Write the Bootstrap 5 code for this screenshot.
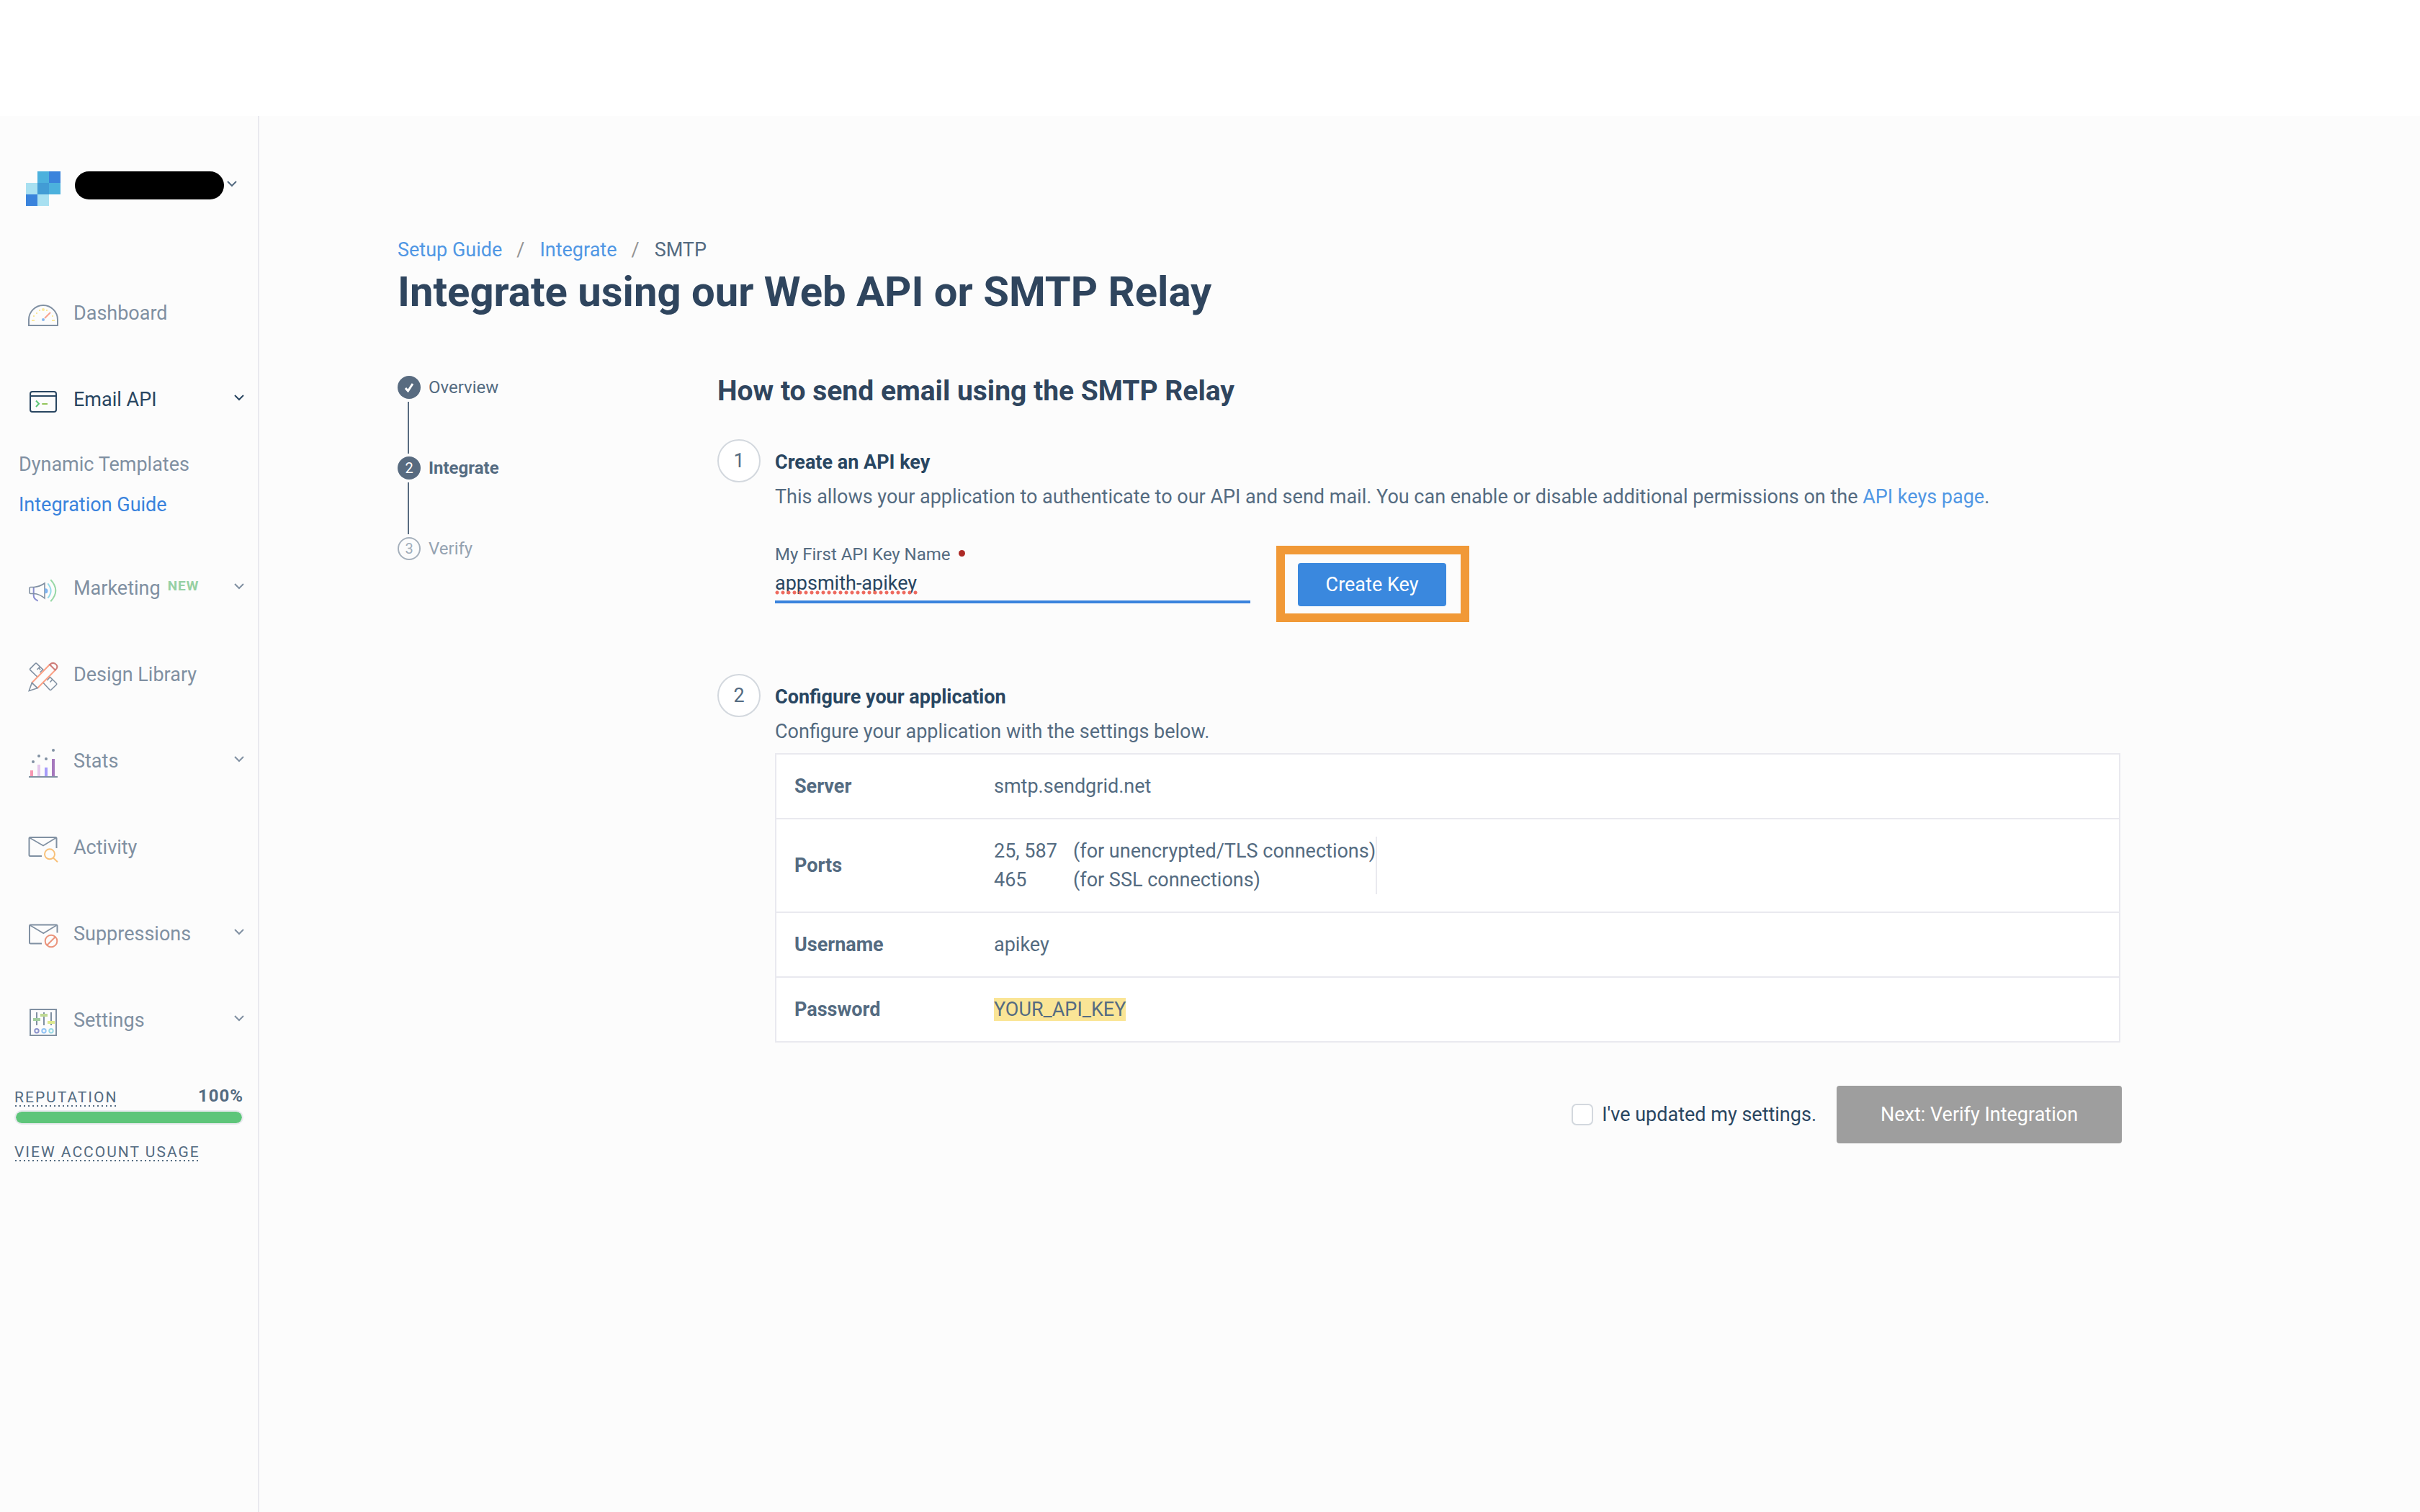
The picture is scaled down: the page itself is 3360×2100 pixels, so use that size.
<!DOCTYPE html>
<html lang="en">
<head>
<meta charset="utf-8">
<meta name="viewport" content="width=device-width, initial-scale=1">
<title>Integrate using our Web API or SMTP Relay</title>
<link rel="stylesheet" href="https://cdn.jsdelivr.net/npm/bootstrap@5.3.0/dist/css/bootstrap.min.css">
<style>
  :root { --ink: #294661; --text: #546b81; --muted: #8090a2; --line: #e9e9ef; --blue: #3a83dd; --link: #5097e4; }
  body { font-family: Roboto, "Liberation Sans", sans-serif; font-size: 27px; line-height: 40px; color: var(--text); background: #fff; }
  a { text-decoration: none; }
  .topspace { height: 161px; }
  .shell { background: #fcfcfc; }

  /* sidebar */
  .sidebar { width: 360px; border-right: 2px solid var(--line); padding-top: 77px; }
  .account { padding-left: 36px; height: 48px; margin-bottom: 89px; }
  .account .btn { color: var(--text); }
  .account-name { width: 207px; height: 39px; border-radius: 20px; background: #000; margin-left: 20px; }
  .chev { width: 14px; height: 14px; fill: none; stroke: currentColor; stroke-width: 2; }
  .side-item { height: 120px; padding: 0 19px 0 39px; color: var(--muted); }
  .side-item.current { color: var(--ink); }
  .side-icon { width: 42px; height: 48px; margin-right: 21px; fill: none; stroke: currentColor; stroke-width: 2; overflow: visible; }
  .side-sub { padding: 2px 0 28px 26px; }
  .side-sub a { line-height: 56px; color: var(--muted); }
  .side-sub a.current { color: var(--blue); }
  .new-tag { font-size: 19px; font-weight: 700; line-height: 28px; color: #96d0a4; letter-spacing: 1px; margin: 0 0 6px 10px; }
  .usage { padding: 33px 20px 0; }
  .caps { font-size: 21px; line-height: 28px; letter-spacing: 2px; color: var(--text);
    background: linear-gradient(90deg, var(--text) 2px, transparent 2px) 1px 25px / 6px 2px repeat-x; }
  .score { font-size: 24px; line-height: 24px; letter-spacing: 1px; }
  .meter { height: 20px; margin-top: 4px; border: 2px solid var(--line); border-radius: 10px; background: transparent; }
  .meter .progress-bar { background: #5ec57a; border-radius: 8px; }

  /* content */
  .content { padding: 166px 414px 80px 192px; }
  .crumbs { color: var(--text); margin-bottom: 4px; }
  .crumbs a, .step-text a { color: var(--link); }
  .crumbs .breadcrumb-item { padding: 0; color: var(--text); }
  .crumbs .breadcrumb-item + .breadcrumb-item::before { content: "/"; color: #949494; padding: 0 21px 0 20px; }
  .page-title { font-size: 58px; line-height: 68px; font-weight: 700; color: #2f455e; margin-bottom: 80px; }
  .stepper { width: 444px; padding-top: 3px; font-size: 24px; line-height: 32px; }
  .step-dot { width: 32px; height: 32px; border-radius: 50%; background: #586b80; color: #fff; font-size: 20px; margin-right: 11px; }
  .step-dot.todo { background: transparent; border: 2px solid #a5b0bc; color: #a0acb9; }
  .step-line { width: 2px; height: 72px; margin: 4px 0 4px 14px; background: #586b80; }
  .todo-label { color: #94a2b1; }
  .section-title { font-size: 39px; line-height: 48px; font-weight: 700; color: #2f455e; margin-bottom: 43px; }
  .big-dot { width: 60px; height: 60px; border: 2px solid #d3d8de; border-radius: 50%; background: #fff; margin-right: 20px; }
  .step-body { padding-top: 8px; }
  .step-name { font-size: 27px; line-height: 48px; font-weight: 700; color: var(--ink); margin: 0; }
  .step-text { line-height: 48px; margin: 0; }
  .key-form { margin: 40px 0 72px; }
  .key-field { width: 660px; }
  .key-field label { display: block; font-size: 24px; line-height: 32px; }
  .needed { display: inline-block; width: 9px; height: 9px; border-radius: 50%; background: #ad2a26; margin: 0 0 5px 11px; }
  .key-input { height: 52px; padding: 0; border: 0; border-bottom: 4px solid var(--blue); border-radius: 0; background: transparent !important; color: var(--ink); font-size: 27px; line-height: 40px; box-shadow: none !important; }
  .spell { left: 0; top: 34px; width: 200px; height: 6px; background: radial-gradient(circle at 3px 3px, #ee6a5f 2px, transparent 3px) 0 0 / 8px 6px; pointer-events: none; }
  .callout-frame { margin: 4px 0 0 36px; border: 12px solid #f19937; padding: 12px 20px 10px 18px; }
  .btn-key { width: 206px; height: 60px; padding: 0; border: 0; border-radius: 4px; background: #3a88de; color: #fff; font-size: 27px; line-height: 40px; }
  .settings { width: calc(100% - 2px); margin: 6px 0 60px; border: 2px solid var(--line); border-bottom: 0; border-collapse: separate; border-spacing: 0; background: #fff; }
  .settings > tbody > tr > * { padding: 24px 0; border-bottom: 2px solid var(--line); }
  .settings > tbody > tr > th { width: 302px; padding-left: 25px; font-weight: 700; vertical-align: middle; }
  .ports { border-right: 2px solid var(--line); border-collapse: separate; border-spacing: 0; }
  .ports td { padding: 0; }
  .ports td:first-child { width: 110px; }
  .key-mark { background: #fae596; color: inherit; padding: 0; }
  .agree input { width: 30px; height: 30px; margin: 0 12px 0 0; border: 2px solid #d3d8de; border-radius: 4px; background: #fff; float: none; }
  .agree label { color: var(--ink); }
  .btn-next { width: 396px; height: 80px; margin-left: 28px; border: 0; border-radius: 4px; font-size: 27px; line-height: 40px; }
  .btn-next:disabled { background: #9e9e9e; color: #fff; opacity: 1; }
</style>
<script src="https://cdn.jsdelivr.net/npm/bootstrap@5.3.0/dist/js/bootstrap.bundle.min.js"></script>
</head>
<body class="d-flex flex-column min-vh-100">
<div class="topspace flex-shrink-0"></div>
<div class="shell d-flex flex-grow-1">
  <aside class="sidebar flex-shrink-0">
    <div class="account d-flex align-items-start">
      <svg width="48" height="48" viewBox="0 0 3 3" shape-rendering="crispEdges" aria-hidden="true">
        <path fill="#4cb1dd" d="M1 0h1v1H1zM2 1h1v1H2z"/><path fill="#3a83dc" d="M2 0h1v1H2zM0 2h1v1H0z"/>
        <path fill="#a8e0f1" d="M0 1h1v1H0zM1 2h1v1H1z"/><path fill="#429cd5" d="M1 1h1v1H1z"/>
      </svg>
      <button type="button" class="btn p-0 border-0 d-flex align-items-center" aria-label="Account menu">
        <span class="account-name"></span>
        <svg class="chev ms-1" viewBox="0 1 14 14"><path d="M1 2l6 6 6-6"/></svg>
      </button>
    </div>
    <nav class="d-flex flex-column">
      <a href="#" class="side-item d-flex align-items-center">
        <svg class="side-icon" viewBox="0 1 42 48"><path d="M1 42V34a20 20 0 0 1 40 0v8z"/>
          <g fill="#fbe89c" stroke="none"><circle cx="21" cy="20" r="2"/><path d="M15 20h2v2h-2zM25 20h2v2h-2zM11 24h2v2h-2zM7 28h2v2H7zM33 28h2v2h-2zM5 34h4v2H5zM33 34h4v2h-4z"/></g>
          <path d="M23 32l8-8" stroke="#f7a08c"/><circle cx="21" cy="34" r="2" fill="#86b6ee" stroke="none"/></svg>
        <span>Dashboard</span>
      </a>
      <a href="#" class="side-item current d-flex align-items-center">
        <svg class="side-icon" viewBox="0 1 42 48"><rect x="3" y="14" width="36" height="28" rx="3"/><path d="M3 20h36"/>
          <path d="M11 26.500l4 4.200-4 4.300" stroke="#5cc575"/><path d="M19.300 31H27" stroke="#93c45b"/></svg>
        <span>Email API</span>
        <svg class="chev ms-auto" viewBox="0 1 14 14"><path d="M1 2l6 6 6-6"/></svg>
      </a>
      <div class="side-sub d-flex flex-column">
        <a href="#">Dynamic Templates</a>
        <a href="#" class="current">Integration Guide</a>
      </div>
      <a href="#" class="side-item d-flex align-items-center">
        <svg class="side-icon" viewBox="0 1 42 48"><path d="M7.700 24v11q0 5 6 7.500" stroke="#8a8fd0"/>
          <path d="M8 23.500H3.500q-1.500 0-1.500 1.500v6q0 1.500 1.500 1.500H8q8 .5 15 6.500V18q-7 5-15 5.500z" stroke-width="1.600"/>
          <path d="M24 26.300a2.500 2.500 0 0 1 0 5z" fill="#7fb4f0" stroke="#7fb4f0"/>
          <path d="M27.300 18.300q8.500 10.200 0 20.400" stroke="#97dbe8"/><path d="M31.300 13.300q14 15 0 30" stroke="#98d8a6"/></svg>
        <span>Marketing</span><span class="new-tag">NEW</span>
        <svg class="chev ms-auto" viewBox="0 1 14 14"><path d="M1 2l6 6 6-6"/></svg>
      </a>
      <a href="#" class="side-item d-flex align-items-center">
        <svg class="side-icon" viewBox="0 1 42 48"><g stroke-width="1.600"><path d="M13 28.300L3 18.600q-1-1 0-2l7-7q1-1 2 0L22 19.300M16.500 14l-4 4M17 18.500l-1.500-2.500M20.500 18l-4 4"/>
          <path d="M21 36.300L30 46q1 1 2 0l7.300-7q1-1 0-2L29.300 27.300M34 31.500l-3.500 4M30.300 28.500l-4 4.500"/></g>
          <path d="M30 11L5.300 36.300M37.700 18.700L13 43.700" stroke="#fba084"/>
          <path d="M30 11l7.700 7.700q4.500-4 1.500-7.500-4-4.500-9.200-.2z" stroke="#cf7c78"/><path d="M5.300 36.300l-4 11.200L13 43.700z" stroke-width="1.600"/></svg>
        <span>Design Library</span>
      </a>
      <a href="#" class="side-item d-flex align-items-center">
        <svg class="side-icon" viewBox="0 1 42 48"><g stroke="none"><g fill="#8090a2"><circle cx="7" cy="26" r="2"/><circle cx="15" cy="18" r="2"/><circle cx="25" cy="22" r="2"/><circle cx="35" cy="10" r="2"/><path d="M1 46h40v2H1z"/></g>
          <path fill="#f797b2" d="M3 38h4v8H3z"/><path fill="#e4c8ec" d="M13 30h4v16h-4z"/><path fill="#a59bfa" d="M23 34h4v12h-4z"/><path fill="#a578bd" d="M33 22h4v24h-4z"/></g></svg>
        <span>Stats</span>
        <svg class="chev ms-auto" viewBox="0 1 14 14"><path d="M1 2l6 6 6-6"/></svg>
      </a>
      <a href="#" class="side-item d-flex align-items-center">
        <svg class="side-icon" viewBox="0 1 42 48"><path d="M19 37H3q-1.500 0-1.500-1.500V12.500Q1.500 11 3 11h35q1.500 0 1.500 1.500V26"/><path d="M2 11.500l19 11 18-11" stroke-width="1.600"/>
          <circle cx="30" cy="34.300" r="7" stroke="#f8c078"/><path d="M35 39.500l6 5.700" stroke="#f8c078"/></svg>
        <span>Activity</span>
      </a>
      <a href="#" class="side-item d-flex align-items-center">
        <svg class="side-icon" viewBox="0 1 42 48"><path d="M19 38.500H3.500Q2 38.500 2 37V14q0-1.500 1.500-1.500h35.500q1.500 0 1.500 1.500v9.500"/><path d="M3 13.300l18.300 11 18-11" stroke-width="1.600"/>
          <circle cx="32" cy="35" r="8.300" stroke="#ea937b"/><path d="M26 41l12-12" stroke="#ea937b"/></svg>
        <span>Suppressions</span>
        <svg class="chev ms-auto" viewBox="0 1 14 14"><path d="M1 2l6 6 6-6"/></svg>
      </a>
      <a href="#" class="side-item d-flex align-items-center">
        <svg class="side-icon" viewBox="0 1 42 48"><rect x="3" y="10" width="36" height="36"/><path d="M12 14v18M22 14v18M32 14v18"/>
          <g stroke="none"><path fill="#a3cd9f" d="M7 22h10v4H7z"/><path fill="#bfd992" d="M17 16h10v4H17z"/><path fill="#dde98f" d="M27 26h10v4H27z"/></g>
          <circle cx="12" cy="39.700" r="2.700" stroke="#8c93cc"/><circle cx="22" cy="39.700" r="2.700" stroke="#91c4f6"/><circle cx="32" cy="39.700" r="2.700" stroke="#98d9e5"/></svg>
        <span>Settings</span>
        <svg class="chev ms-auto" viewBox="0 1 14 14"><path d="M1 2l6 6 6-6"/></svg>
      </a>
    </nav>
    <div class="usage">
      <div class="d-flex justify-content-between align-items-start">
        <a href="#" class="caps">REPUTATION</a><strong class="score">100%</strong>
      </div>
      <div class="progress meter" role="progressbar" aria-label="Reputation" aria-valuenow="100" aria-valuemin="0" aria-valuemax="100">
        <div class="progress-bar" style="width:100%"></div>
      </div>
      <div class="d-flex mt-4"><a href="#" class="caps">VIEW ACCOUNT USAGE</a></div>
    </div>
  </aside>

  <main class="content flex-grow-1">
    <nav aria-label="breadcrumb">
      <ol class="breadcrumb crumbs">
        <li class="breadcrumb-item"><a href="#">Setup Guide</a></li>
        <li class="breadcrumb-item"><a href="#">Integrate</a></li>
        <li class="breadcrumb-item" aria-current="page">SMTP</li>
      </ol>
    </nav>
    <h1 class="page-title">Integrate using our Web API or SMTP Relay</h1>

    <div class="d-flex">
      <div class="stepper flex-shrink-0">
        <div class="d-flex align-items-center">
          <span class="step-dot d-flex align-items-center justify-content-center"><svg width="14" height="14" viewBox="0 0 14 14" fill="none" stroke="#fff" stroke-width="3"><path d="M2 8l3.500 4L12 2"/></svg></span>Overview
        </div>
        <div class="step-line"></div>
        <div class="d-flex align-items-center fw-bold">
          <span class="step-dot d-flex align-items-center justify-content-center fw-normal">2</span>Integrate
        </div>
        <div class="step-line"></div>
        <div class="d-flex align-items-center todo-label">
          <span class="step-dot todo d-flex align-items-center justify-content-center">3</span>Verify
        </div>
      </div>

      <div class="flex-grow-1">
        <h2 class="section-title">How to send email using the SMTP Relay</h2>

        <section class="d-flex">
          <span class="big-dot d-flex align-items-center justify-content-center flex-shrink-0">1</span>
          <div class="step-body flex-grow-1">
            <h3 class="step-name">Create an API key</h3>
            <p class="step-text">This allows your application to authenticate to our API and send mail. You can enable or disable additional permissions on the <a href="#">API keys page</a>.</p>
            <form class="key-form d-flex align-items-start">
              <div class="key-field">
                <label for="keyName">My First API Key Name<span class="needed"></span></label>
                <div class="position-relative">
                  <input type="text" id="keyName" class="form-control key-input" value="appsmith-apikey" spellcheck="false">
                  <span class="spell position-absolute" aria-hidden="true"></span>
                </div>
              </div>
              <div class="callout-frame"><button type="button" class="btn btn-key d-block">Create Key</button></div>
            </form>
          </div>
        </section>

        <section class="d-flex">
          <span class="big-dot d-flex align-items-center justify-content-center flex-shrink-0">2</span>
          <div class="step-body flex-grow-1">
            <h3 class="step-name">Configure your application</h3>
            <p class="step-text">Configure your application with the settings below.</p>
            <table class="settings">
              <tbody>
                <tr><th scope="row">Server</th><td>smtp.sendgrid.net</td></tr>
                <tr><th scope="row">Ports</th><td>
                  <table class="ports">
                    <tbody>
                      <tr><td>25, 587</td><td>(for unencrypted/TLS connections)</td></tr>
                      <tr><td>465</td><td>(for SSL connections)</td></tr>
                    </tbody>
                  </table>
                </td></tr>
                <tr><th scope="row">Username</th><td>apikey</td></tr>
                <tr><th scope="row">Password</th><td><mark class="key-mark">YOUR_API_KEY</mark></td></tr>
              </tbody>
            </table>
            <div class="d-flex justify-content-end align-items-center">
              <div class="agree d-flex align-items-center">
                <input type="checkbox" class="form-check-input" id="updated"><label for="updated">I've updated my settings.</label>
              </div>
              <button type="button" class="btn btn-next" disabled>Next: Verify Integration</button>
            </div>
          </div>
        </section>
      </div>
    </div>
  </main>
</div>
</body>
</html>
